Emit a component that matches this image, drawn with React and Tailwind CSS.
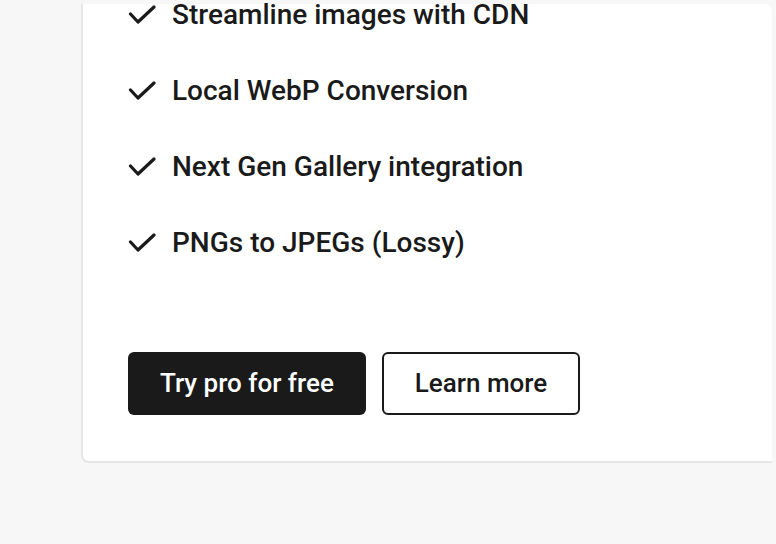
import React from "react";

const features = [
  "Streamline images with CDN",
  "Local WebP Conversion",
  "Next Gen Gallery integration",
  "PNGs to JPEGs (Lossy)",
];

const CheckIcon = () => (
  <svg width="28" height="22" viewBox="0 0 28 22" fill="none" className="shrink-0">
    <path d="M2.5 10 L10 18 L26 3" stroke="#1a1a1a" strokeWidth="3.2" strokeLinecap="round" strokeLinejoin="round" />
  </svg>
);

const App = () => {
  return (
    <div className="w-[776px] h-[544px] bg-[#f7f7f7] overflow-hidden pt-[4px] pl-[81px] pr-[4px] font-['Roboto',sans-serif]">
      <div className="flex flex-col h-[459px] bg-white border-l-2 border-b-2 border-[#e6e6e6] rounded-bl-lg rounded-tr-lg pl-[45px]">
        <ul className="flex flex-col gap-[44px] -mt-[5px]">
          {features.map((f) => (
            <li key={f} className="flex items-center gap-4 h-8 text-[28px] leading-8 font-medium text-[#1a1a1a]">
              <CheckIcon />
              <span>{f}</span>
            </li>
          ))}
        </ul>

        <div className="flex gap-4 mt-[93px]">
          <button className="h-[63px] px-[32px] rounded-md bg-[#1a1a1a] text-white text-[26px] font-medium">
            Try pro for free
          </button>
          <button className="h-[63px] px-[31px] rounded-md border-2 border-[#1a1a1a] bg-white text-[#1a1a1a] text-[26px] font-medium">
            Learn more
          </button>
        </div>
      </div>
    </div>
  );
};

export default App;
